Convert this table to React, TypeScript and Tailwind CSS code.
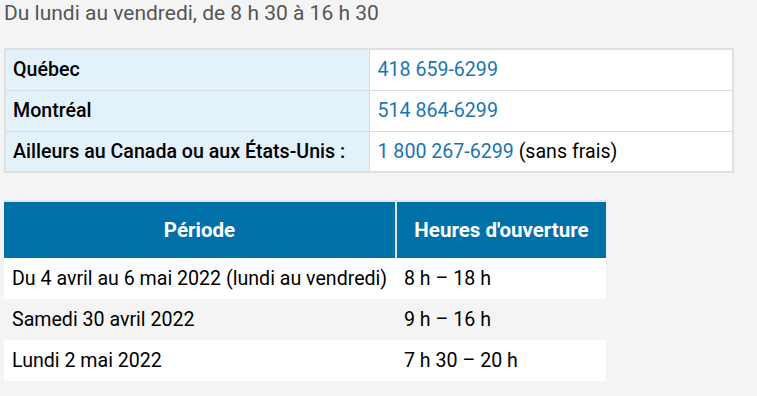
import React from "react";

const contacts = [
  { place: "Québec", phone: "418 659-6299", extra: "" },
  { place: "Montréal", phone: "514 864-6299", extra: "" },
  { place: "Ailleurs au Canada ou aux États-Unis :", phone: "1 800 267-6299", extra: " (sans frais)" },
];

const hours = [
  { period: "Du 4 avril au 6 mai 2022 (lundi au vendredi)", time: "8 h – 18 h" },
  { period: "Samedi 30 avril 2022", time: "9 h – 16 h" },
  { period: "Lundi 2 mai 2022", time: "7 h 30 – 20 h" },
];

export default function App() {
  return (
    <div
      className="min-h-[396px] w-full bg-[#f4f4f4] px-[4px] text-[19.6px] text-black"
      style={{ fontFamily: "Roboto, 'Liberation Sans', sans-serif" }}
    >
      <p className="pt-[1px] text-[21px] leading-[25px] text-[#555555]">Du lundi au vendredi, de 8 h 30 à 16 h 30</p>

      {/* Contact table */}
      <table className="mt-[22px] w-[730px] border-collapse border-2 border-[#e0e0e0]">
        <tbody>
          {contacts.map((c, i) => (
            <tr key={i} className="h-[41px] border-t border-[#dcdcdc] first:border-t-0">
              <td className="w-[364px] bg-[#e3f1fa] px-[7px] font-medium">{c.place}</td>
              <td className="border-l border-[#dcdcdc] bg-white px-[8px]">
                <a className="text-[#1b75b0]" href="#">{c.phone}</a>
                {c.extra}
              </td>
            </tr>
          ))}
        </tbody>
      </table>

      {/* Opening hours */}
      <table className="mt-[27px] w-[602px] border-collapse border-t-[2px] border-[#e4e4e4]">
        <thead>
          <tr className="h-[57px] bg-[#0071a8] text-[20.5px] font-bold text-white">
            <th className="w-[392px] px-[8px] text-center">Période</th>
            <th className="border-l-2 border-[#dfe6ea] px-[8px] text-center">Heures d'ouverture</th>
          </tr>
        </thead>
        <tbody>
          {hours.map((h, i) => (
            <tr key={i} className={`h-[41px] ${i % 2 === 1 ? "bg-[#f4f4f4]" : "bg-white"}`}>
              <td className="px-[8px] whitespace-nowrap">{h.period}</td>
              <td className="px-[8px]">{h.time}</td>
            </tr>
          ))}
        </tbody>
      </table>
    </div>
  );
}
